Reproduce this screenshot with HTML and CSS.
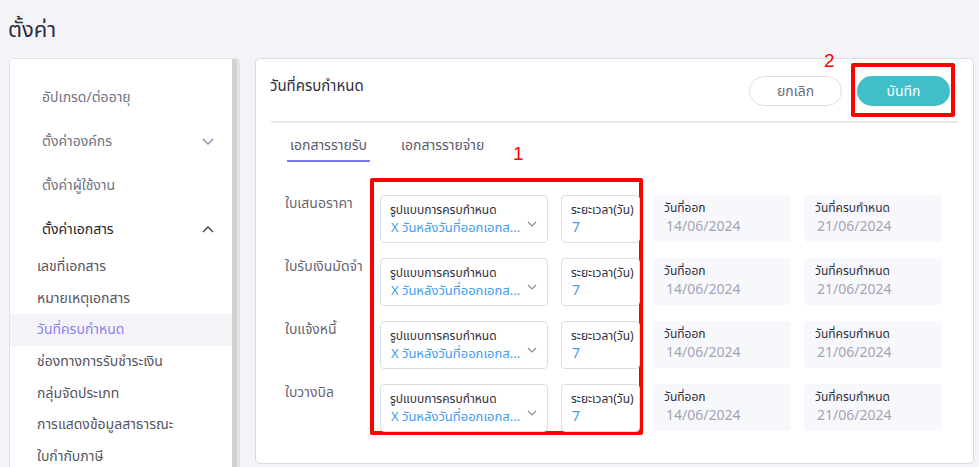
FILE: index.html
```html
<!DOCTYPE html>
<html lang="th">
<head>
<meta charset="utf-8">
<title>ตั้งค่า</title>
<link rel="stylesheet" href="styles.css">
</head>
<body>
<div class="page">
  <h1 class="page-title">ตั้งค่า</h1>
  <div class="layout">
    <aside class="sidebar">
      <div class="side-list">
        <div class="side-item">อัปเกรด/ต่ออายุ</div>
        <div class="side-item">ตั้งค่าองค์กร
          <svg class="chev" width="12" height="7" viewBox="0 0 12 7"><path d="M1 1l5 5 5-5" fill="none" stroke="#8a8aa8" stroke-width="1.3"/></svg>
        </div>
        <div class="side-item">ตั้งค่าผู้ใช้งาน</div>
        <div class="side-item side-item-open">ตั้งค่าเอกสาร
          <svg class="chev" width="12" height="7" viewBox="0 0 12 7"><path d="M1 6l5-5 5 5" fill="none" stroke="#3a3a55" stroke-width="1.3"/></svg>
        </div>
        <div class="sub-item">เลขที่เอกสาร</div>
        <div class="sub-item">หมายเหตุเอกสาร</div>
        <div class="sub-item sub-item-active">วันที่ครบกำหนด</div>
        <div class="sub-item">ช่องทางการรับชำระเงิน</div>
        <div class="sub-item">กลุ่มจัดประเภท</div>
        <div class="sub-item">การแสดงข้อมูลสาธารณะ</div>
        <div class="sub-item">ใบกำกับภาษี</div>
      </div>
      <div class="scrollbar"></div>
    </aside>
    <main class="card">
      <div class="card-header">
        <div class="card-title">วันที่ครบกำหนด</div>
        <div class="actions">
          <button class="btn btn-cancel">ยกเลิก</button>
          <button class="btn btn-save">บันทึก
            <span class="mark mark-save"></span>
            <span class="mark-num mark-num-2">2</span>
          </button>
        </div>
      </div>
      <div class="divider"></div>
      <div class="tabs">
        <div class="tab tab-active">เอกสารรายรับ</div>
        <div class="tab">เอกสารรายจ่าย</div>
      </div>
      <div class="rows">
        <span class="mark mark-fields"></span>
        <span class="mark-num mark-num-1">1</span>
        <div class="row">
          <div class="row-label">ใบเสนอราคา</div>
          <div class="field field-select">
            <div class="field-label">รูปแบบการครบกำหนด</div>
            <div class="field-value select-value">X วันหลังวันที่ออกเอกส...</div>
            <svg class="select-chev" width="10" height="6" viewBox="0 0 10 6"><path d="M1 1l4 4 4-4" fill="none" stroke="#8a8aa0" stroke-width="1.2"/></svg>
          </div>
          <div class="field field-days">
            <div class="field-label">ระยะเวลา(วัน)</div>
            <div class="field-value">7</div>
          </div>
          <div class="readonly">
            <div class="field-label">วันที่ออก</div>
            <div class="readonly-value">14/06/2024</div>
          </div>
          <div class="readonly">
            <div class="field-label">วันที่ครบกำหนด</div>
            <div class="readonly-value">21/06/2024</div>
          </div>
        </div>
        <div class="row">
          <div class="row-label">ใบรับเงินมัดจำ</div>
          <div class="field field-select">
            <div class="field-label">รูปแบบการครบกำหนด</div>
            <div class="field-value select-value">X วันหลังวันที่ออกเอกส...</div>
            <svg class="select-chev" width="10" height="6" viewBox="0 0 10 6"><path d="M1 1l4 4 4-4" fill="none" stroke="#8a8aa0" stroke-width="1.2"/></svg>
          </div>
          <div class="field field-days">
            <div class="field-label">ระยะเวลา(วัน)</div>
            <div class="field-value">7</div>
          </div>
          <div class="readonly">
            <div class="field-label">วันที่ออก</div>
            <div class="readonly-value">14/06/2024</div>
          </div>
          <div class="readonly">
            <div class="field-label">วันที่ครบกำหนด</div>
            <div class="readonly-value">21/06/2024</div>
          </div>
        </div>
        <div class="row">
          <div class="row-label">ใบแจ้งหนี้</div>
          <div class="field field-select">
            <div class="field-label">รูปแบบการครบกำหนด</div>
            <div class="field-value select-value">X วันหลังวันที่ออกเอกส...</div>
            <svg class="select-chev" width="10" height="6" viewBox="0 0 10 6"><path d="M1 1l4 4 4-4" fill="none" stroke="#8a8aa0" stroke-width="1.2"/></svg>
          </div>
          <div class="field field-days">
            <div class="field-label">ระยะเวลา(วัน)</div>
            <div class="field-value">7</div>
          </div>
          <div class="readonly">
            <div class="field-label">วันที่ออก</div>
            <div class="readonly-value">14/06/2024</div>
          </div>
          <div class="readonly">
            <div class="field-label">วันที่ครบกำหนด</div>
            <div class="readonly-value">21/06/2024</div>
          </div>
        </div>
        <div class="row">
          <div class="row-label">ใบวางบิล</div>
          <div class="field field-select">
            <div class="field-label">รูปแบบการครบกำหนด</div>
            <div class="field-value select-value">X วันหลังวันที่ออกเอกส...</div>
            <svg class="select-chev" width="10" height="6" viewBox="0 0 10 6"><path d="M1 1l4 4 4-4" fill="none" stroke="#8a8aa0" stroke-width="1.2"/></svg>
          </div>
          <div class="field field-days">
            <div class="field-label">ระยะเวลา(วัน)</div>
            <div class="field-value">7</div>
          </div>
          <div class="readonly">
            <div class="field-label">วันที่ออก</div>
            <div class="readonly-value">14/06/2024</div>
          </div>
          <div class="readonly">
            <div class="field-label">วันที่ครบกำหนด</div>
            <div class="readonly-value">21/06/2024</div>
          </div>
        </div>
      </div>
    </main>
  </div>
</div>
</body>
</html>
```
FILE: styles.css
```css
* { box-sizing: border-box; }
html, body { margin: 0; height: 100%; }
body {
  background: #f3f3f8;
  font-family: "Noto Sans Thai", "Noto Sans", "DejaVu Sans", sans-serif;
  color: #333;
  overflow: hidden;
}
.page { height: 467px; display: flex; flex-direction: column; }
.page-title {
  margin: 0;
  height: 58px;
  padding: 17px 0 0 8px;
  font-size: 22px;
  font-weight: 400;
  line-height: 28px;
  color: #2e2e3e;
}
.layout { flex: 1; display: flex; gap: 15px; padding-left: 9px; min-height: 0; }
.sidebar {
  width: 231px;
  background: #fff;
  border: 1px solid #e2e2ec;
  border-bottom: none;
  border-radius: 4px 4px 0 0;
  display: flex;
  overflow: hidden;
}
.side-list { flex: 1; padding-top: 16px; }
.scrollbar { width: 7px; background: linear-gradient(to right, #d2d2d2 0, #d2d2d2 5px, #e4e4e4 5px); }
.side-item {
  height: 44px;
  display: flex;
  align-items: center;
  justify-content: space-between;
  padding: 0 18px 0 32px;
  font-size: 14px;
  color: #727280;
}
.side-item-open { color: #1e1e2a; }
.sub-item {
  height: 31.6px;
  display: flex;
  align-items: center;
  padding-left: 27px;
  font-size: 14px;
  color: #555562;
}
.sub-item-active { background: #f4f4f8; color: #8f80f0; }
.card {
  width: 719px;
  height: 406px;
  background: #fff;
  border: 1px solid #dcdce8;
  border-radius: 5px;
  display: flex;
  flex-direction: column;
}
.card-header {
  height: 62px;
  display: flex;
  justify-content: space-between;
  align-items: flex-start;
  padding: 17px 23px 0 14px;
}
.card-title { font-size: 15px; line-height: 22px; color: #2e2e3e; }
.actions { display: flex; gap: 15px; }
.btn {
  position: relative;
  width: 93px;
  height: 30px;
  border-radius: 15px;
  font-family: inherit;
  font-size: 14px;
  cursor: pointer;
}
.btn-cancel { background: #fff; border: 1.5px solid #dcdce8; color: #6a6a80; }
.btn-save { background: #40bfca; border: none; color: #fff; }
.mark { position: absolute; border: 4px solid #ff0000; border-radius: 2px; pointer-events: none; }
.mark-save { top: -13px; bottom: -11px; left: -6px; right: -5px; }
.mark-num { position: absolute; color: #ff0000; font-size: 19px; line-height: 20px; font-family: "Liberation Sans", sans-serif; }
.mark-num-2 { top: -25px; left: -33px; }
.divider { height: 2px; background: #e6e6ee; margin: 0 15px 0 15px; }
.tabs { display: flex; gap: 28px; padding: 11px 0 0 31px; }
.tab {
  padding: 0 3px;
  height: 28px;
  line-height: 24px;
  font-size: 14px;
  color: #5a5a6a;
  border-bottom: 2px solid transparent;
}
.tab-active { border-bottom-color: #7b7be6; }
.rows {
  position: relative;
  display: flex;
  flex-direction: column;
  gap: 15px;
  padding: 33px 0 0 29px;
}
.mark-fields { top: 16px; left: 114px; width: 273px; height: 257px; }
.mark-num-1 { top: -18px; left: 257px; }
.row { display: flex; height: 48px; }
.row-label { width: 95px; font-size: 14px; color: #666672; line-height: 18px; }
.field {
  position: relative;
  height: 48px;
  border: 1px solid #dcdce8;
  border-radius: 4px;
  padding: 6px 0 0 9px;
  margin-right: 13px;
}
.field-select { width: 168px; }
.field-days { width: 79px; }
.field-label { font-size: 12px; line-height: 16px; color: #2e2e3e; white-space: nowrap; }
.field-value { font-size: 14px; line-height: 20px; color: #3f9cf0; white-space: nowrap; padding-left: 1px; }
.select-value { font-size: 13px; width: 132px; overflow: hidden; }
.select-chev { position: absolute; right: 10px; top: 25px; }
.readonly {
  width: 138px;
  height: 47px;
  background: #f7f8fc;
  border-radius: 4px;
  padding: 5px 0 0 11px;
  margin-right: 13px;
}
.readonly-value { font-size: 14px; line-height: 21px; color: #a4a4b4; padding-left: 2px; }
```
